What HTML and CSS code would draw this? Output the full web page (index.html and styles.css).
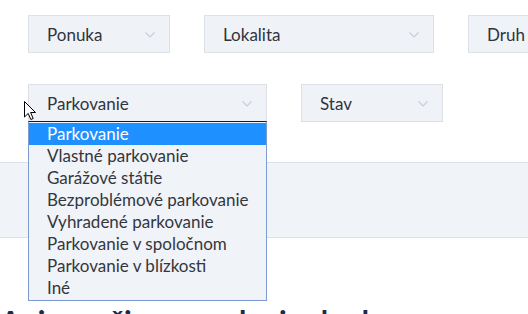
FILE: index.html
```html
<!DOCTYPE html>
<html lang="sk">
<head>
<meta charset="utf-8">
<link rel="stylesheet" href="styles.css">
</head>
<body>
<div class="page">
  <div class="filters">
    <div class="row">
      <div class="select w-sm"><span>Ponuka</span><svg class="chev" viewBox="0 0 10 6"><path d="M0.5 0.5 L5 5 L9.5 0.5"/></svg></div>
      <div class="select w-md"><span>Lokalita</span><svg class="chev" viewBox="0 0 10 6"><path d="M0.5 0.5 L5 5 L9.5 0.5"/></svg></div>
      <div class="select w-md"><span>Druh</span><svg class="chev" viewBox="0 0 10 6"><path d="M0.5 0.5 L5 5 L9.5 0.5"/></svg></div>
    </div>
    <div class="row row2">
      <div class="select w-lg open"><span>Parkovanie</span><svg class="chev" viewBox="0 0 10 6"><path d="M0.5 0.5 L5 5 L9.5 0.5"/></svg>
        <ul class="dropdown">
          <li class="active">Parkovanie</li>
          <li>Vlastné parkovanie</li>
          <li>Garážové státie</li>
          <li>Bezproblémové parkovanie</li>
          <li>Vyhradené parkovanie</li>
          <li>Parkovanie v spoločnom</li>
          <li>Parkovanie v blízkosti</li>
          <li>Iné</li>
        </ul>
        <svg class="cursor" viewBox="0 0 13 20"><path d="M0.5 0.5 L0.5 16 L4.2 12.4 L6.8 18.5 L9.2 17.5 L6.6 11.5 L11.5 11.5 Z"/></svg>
      </div>
      <div class="select w-sm"><span>Stav</span><svg class="chev" viewBox="0 0 10 6"><path d="M0.5 0.5 L5 5 L9.5 0.5"/></svg></div>
    </div>
  </div>
  <div class="band"></div>
  <h2 class="heading">Ani menšie ceny ako inokedy</h2>
</div>
</body>
</html>
```
FILE: styles.css
```css
* { box-sizing: border-box; }
html, body { margin: 0; padding: 0; background: #fff; }
body {
  font-family: Lato, "Open Sans", sans-serif;
  color: #2f343d;
  overflow: hidden;
  width: 528px;
  height: 314px;
}
.page { width: 528px; height: 314px; overflow: hidden; }
.filters {
  padding: 15px 0 0 28px;
  display: flex;
  flex-direction: column;
  gap: 31px;
}
.row {
  display: flex;
  gap: 34px;
  white-space: nowrap;
}
.select {
  position: relative;
  flex: none;
  height: 38px;
  background: #eff2f7;
  border: 1px solid #dde1e7;
  display: flex;
  align-items: center;
  padding: 0 0 0 18px;
  font-size: 17px;
  color: #2f343d;
}
.select span { flex: 1; }
.w-sm { width: 142px; }
.w-md { width: 230px; }
.w-lg { width: 239px; }
.chev {
  width: 10px;
  height: 6px;
  margin-right: 14px;
  margin-top: 2px;
  fill: none;
  stroke: #c9ced6;
  stroke-width: 1.2;
}
.dropdown {
  position: absolute;
  left: -1px;
  top: 36px;
  width: 239px;
  margin: 0;
  padding: 1px 0;
  list-style: none;
  background: #f0f3f8;
  border: 1px solid #7b9bd0;
  border-top: 1px solid #1b1b1b;
  z-index: 5;
}
.dropdown li {
  height: 22px;
  line-height: 22px;
  padding-left: 18px;
  font-size: 17px;
  color: #34373e;
}
.dropdown li.active {
  background: #1e90ff;
  color: #fff;
}
.cursor {
  position: absolute;
  left: -5px;
  top: 16px;
  width: 13px;
  height: 20px;
  fill: #fff;
  stroke: #000;
  stroke-width: 1;
  z-index: 6;
}
.band {
  margin-top: 40px;
  height: 76px;
  background: #f0f3f8;
  border-top: 1px solid #dde1e7;
  border-bottom: 1px solid #dde1e7;
}
.heading {
  margin: 65px 0 0 0;
  font-size: 30px;
  font-weight: 700;
  color: #1d2a4a;
  white-space: nowrap;
}
```
